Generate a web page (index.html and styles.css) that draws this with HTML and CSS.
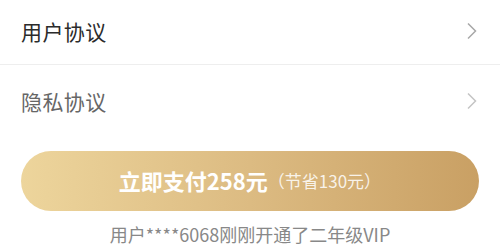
FILE: index.html
```html
<!DOCTYPE html>
<html>
<head>
<meta charset="utf-8">
<link rel="stylesheet" href="styles.css">
</head>
<body>
<div class="page">
  <div class="row row-first">
    <span class="label">用户协议</span>
    <svg class="chev" width="12" height="18" viewBox="0 0 12 18"><path d="M2 1.5 L9.5 9 L2 16.5" fill="none" stroke="#a8a8a8" stroke-width="1.5"/></svg>
  </div>
  <div class="row row-second">
    <span class="label label-muted">隐私协议</span>
    <svg class="chev" width="12" height="18" viewBox="0 0 12 18"><path d="M2 1.5 L9.5 9 L2 16.5" fill="none" stroke="#c4c4c4" stroke-width="1.5"/></svg>
  </div>
  <div class="pay-wrap">
    <button class="pay">
      <span class="pay-main">立即支付258元</span><span class="pay-save">（节省130元）</span>
    </button>
  </div>
  <div class="note">用户****6068刚刚开通了二年级VIP</div>
</div>
</body>
</html>
```

FILE: styles.css
```css
html, body {
  margin: 0;
  padding: 0;
  background: #ffffff;
}
.page {
  width: 500px;
  font-family: "Noto Sans CJK SC", "Noto Sans", sans-serif;
}
.row {
  display: flex;
  align-items: center;
  justify-content: space-between;
  padding: 0 22px 0 21px;
  box-sizing: border-box;
}
.row-first {
  height: 65px;
  padding-bottom: 3px;
  border-bottom: 1px solid #eeeeee;
}
.row-second {
  height: 72px;
  padding-bottom: 1px;
}
.label {
  font-size: 21px;
  color: #2b2b2b;
  letter-spacing: 0.4px;
}
.label-muted {
  color: #666666;
}
.chev {
  display: block;
}
.pay-wrap {
  padding: 14px 21px 0 21px;
}
.pay {
  display: flex;
  align-items: center;
  justify-content: center;
  width: 100%;
  height: 60px;
  border: none;
  border-radius: 30px;
  background: linear-gradient(90deg, #edd59c 0%, #dcbb82 50%, #c9a064 100%);
  font-family: "Noto Sans CJK SC", "Noto Sans", sans-serif;
  padding: 0 0 2px 0;
}
.pay-main {
  font-size: 22px;
  font-weight: 700;
  color: #ffffff;
}
.pay-save {
  font-size: 17px;
  color: rgba(255, 255, 255, 0.85);
}
.note {
  margin-top: 11px;
  text-align: center;
  font-size: 18px;
  line-height: 24px;
  color: #888888;
}
```
